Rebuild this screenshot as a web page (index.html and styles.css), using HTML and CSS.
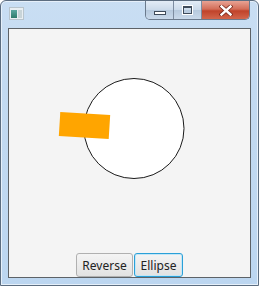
FILE: index.html
```html
<!DOCTYPE html>
<html>
<head>
<meta charset="utf-8">
<link rel="stylesheet" href="styles.css">
</head>
<body>
<div class="window">
  <div class="titlebar">
    <div class="appicon"><span class="ai-a"></span><span class="ai-b"></span></div>
    <div class="caption">
      <div class="cbtn min"><span class="min-glyph"></span></div>
      <div class="cbtn max"><span class="max-glyph"></span></div>
      <div class="cbtn close"><svg width="14" height="11" viewBox="0 0 14 11"><path d="M2.5 1.5 L11.5 9.5 M11.5 1.5 L2.5 9.5" stroke="#7a2a1c" stroke-width="4" stroke-linecap="square"/><path d="M2.5 1.5 L11.5 9.5 M11.5 1.5 L2.5 9.5" stroke="#fff" stroke-width="2.4" stroke-linecap="square"/></svg></div>
    </div>
  </div>
  <div class="content">
    <svg class="canvas" width="242" height="224" viewBox="0 0 242 224">
      <circle cx="125" cy="99.5" r="50" fill="#fff" stroke="#1a1a1a" stroke-width="1"/>
      <rect x="50.5" y="84.5" width="50" height="24" fill="#ffa500" transform="rotate(3.5 75.5 96.5)"/>
    </svg>
    <div class="buttons">
      <button class="btn">Reverse</button>
      <button class="btn focused">Ellipse</button>
    </div>
  </div>
</div>
</body>
</html>
```
FILE: styles.css
```css
html, body { margin: 0; padding: 0; }
body { width: 259px; height: 286px; overflow: hidden; background: #fff; font-family: "Noto Sans", "Open Sans", sans-serif; }
.window {
  box-sizing: border-box;
  width: 259px; height: 286px;
  background: linear-gradient(180deg, #c9def3 0%, #c3daf1 30%, #bcd6f0 100%);
  border: 1px solid #5c6d80;
  border-radius: 6px 6px 0 0;
  display: flex; flex-direction: column;
  box-shadow: inset 0 0 0 1px #e6f0fa;
}
.titlebar {
  height: 27px;
  display: flex; align-items: flex-start; justify-content: space-between;
}
.appicon {
  margin: 6px 0 0 8px;
  width: 15px; height: 13px;
  display: flex;
  background: #e8eef2;
  border: 1px solid #b8c4cc;
  box-sizing: border-box;
}
.ai-a { width: 6px; margin: 2px 0 1px 1px; background: linear-gradient(180deg, #5ba7a0, #2e7b6a); }
.ai-b { width: 4px; margin: 2px 1px 1px 1px; background: #c8d4d8; }
.caption {
  display: flex;
  margin-right: 8px;
  height: 18px;
  border: 1px solid #6b7a8c;
  border-top: none;
  border-radius: 0 0 5px 5px;
  overflow: hidden;
}
.cbtn { display: flex; align-items: center; justify-content: center; height: 18px; }
.min, .max {
  width: 27px;
  background: linear-gradient(180deg, #e3ecf6 0%, #cbdaea 50%, #b6c9dd 51%, #c9d9ea 100%);
  border-right: 1px solid #7d8ca0;
}
.min-glyph { width: 10px; height: 2px; background: #fff; border: 1px solid #3f4b5a; margin-top: 5px; }
.max-glyph { width: 7px; height: 5px; border: 1px solid #3f4b5a; border-top-width: 2px; box-shadow: 0 0 0 1px #fff; }
.close {
  width: 47px;
  background: linear-gradient(180deg, #e8a394 0%, #d36d58 45%, #c0432a 55%, #d2664c 100%);
}
.content {
  flex: 1;
  margin: 0 7px 7px 7px;
  background: #f4f4f4;
  border: 1px solid #5d6267;
  display: flex; flex-direction: column;
}
.canvas { display: block; flex: 1; }
.buttons {
  display: flex; justify-content: center; gap: 1px;
  padding-bottom: 0;
}
.btn {
  box-sizing: border-box;
  height: 24px;
  padding: 0 5px;
  font-family: "Noto Sans", "Open Sans", sans-serif;
  font-size: 12px;
  color: #222;
  background: linear-gradient(180deg, #f4f4f4 0%, #e2e2e2 100%);
  border: 1px solid #b0b0b0;
  border-radius: 3px;
  margin: 0;
}
.btn:first-child { width: 57px; }
.btn.focused { width: 49px; border-color: #2aa0d8; box-shadow: inset 0 0 0 1px #c4e6f6; }
```
